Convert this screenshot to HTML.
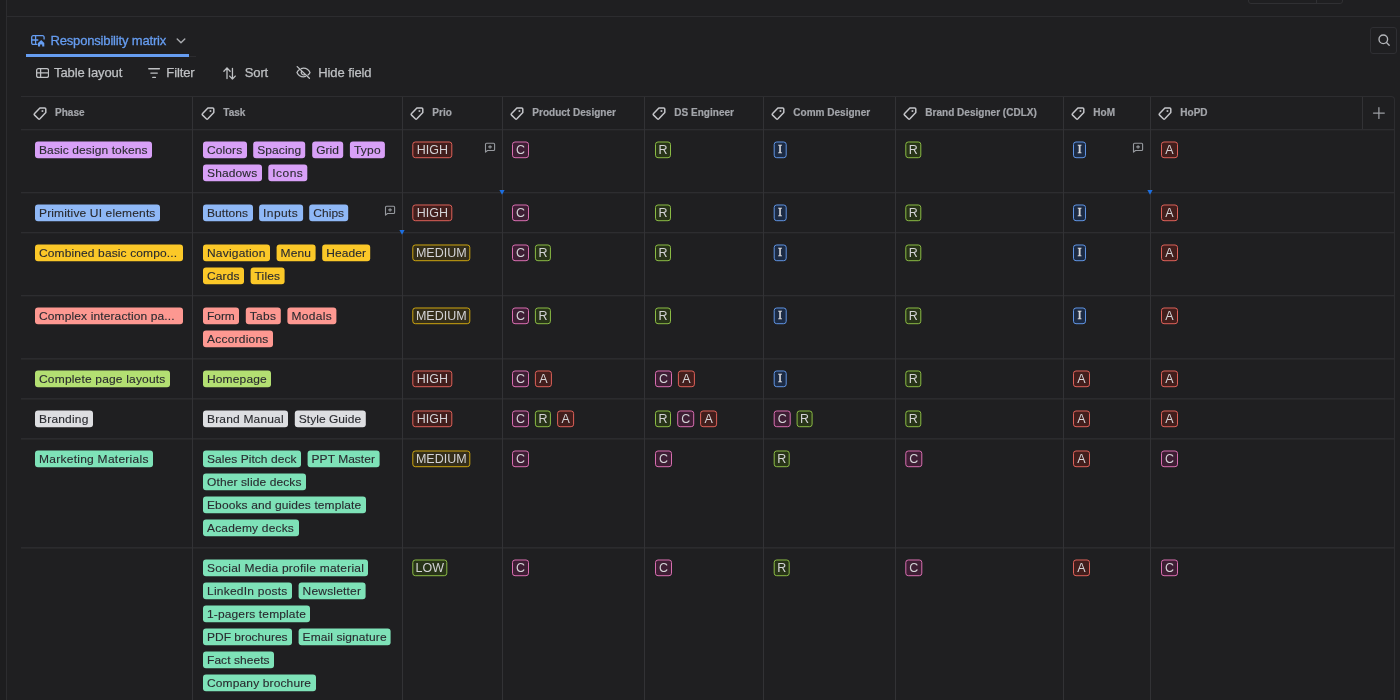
<!DOCTYPE html>
<html lang="en"><head><meta charset="utf-8"><title>Responsibility matrix</title>
<style>
*{box-sizing:border-box;margin:0;padding:0}
html,body{width:1400px;height:700px;overflow:hidden;background:#1f1f21;font-family:"Liberation Sans",Arial,sans-serif;color:#cecfd2}
#app{position:absolute;left:0;top:0;width:1400px;height:700px;overflow:hidden;will-change:transform;filter:blur(.3px)}
.abs{position:absolute}
#side{left:0;top:0;width:6px;height:700px;background:#1d1d1f}
#sideln{left:6px;top:0;width:1px;height:700px;background:#2c2c2f}
#topln{left:7px;top:16px;width:1393px;height:1px;background:#2c2c2f}
#btng{left:1248px;top:-19px;width:95px;height:23px;border:1px solid #303033;border-radius:3px}
#btng i{position:absolute;left:67px;top:0;width:1px;height:22px;background:#303033}
#tab{left:26px;top:27px;width:163px;height:30px;color:#669df1;font-size:13px;border-bottom:3px solid #669df1}
#tabext{left:189px;top:56px;width:7px;height:1px;background:#2c2c2f}
#tab svg.ti{position:absolute;left:5px;top:8.250px}
#tab span{position:absolute;left:24.500px;top:5.600px;white-space:nowrap;letter-spacing:-.17px;transform:translateY(-.5px);-webkit-text-stroke:.3px #669df1}
#tab svg.ch{position:absolute;left:149.500px;top:10px;color:#a9abaf}
#srch{left:1370px;top:27px;width:27px;height:27px;border:1px solid #2f2f33;border-radius:3px;color:#b4b6ba}
#srch svg{position:absolute;left:4.500px;top:4.200px}
.tb{top:64px;height:18px;font-size:13px;color:#bfc1c4;white-space:nowrap;line-height:18px;letter-spacing:-.1px;-webkit-text-stroke:.25px #bfc1c4}
.tb svg{position:absolute}
.hl{height:1px;background:#2d2d30;box-shadow:0 1px 0 rgba(45,45,48,.3)}
.hl.lo{background:#2b2b2e;box-shadow:0 1px 0 rgba(45,45,48,.55)}
.vl{width:1px;background:#323235}
.th{top:97px;height:32px;font-size:10px;font-weight:700;letter-spacing:.02px;color:#a3a5aa;line-height:31px;white-space:nowrap;-webkit-text-stroke:.2px #a3a5aa}
.th .hi{position:absolute;left:8.200px;top:10px;color:#c4c5c9}
.th span{position:absolute;left:30.300px;top:0}
.th.p .hi{left:11.500px}.th.p span{left:34px}
.th.k .hi{left:9px}.th.k span{left:31.300px}
.t{position:absolute;display:block;height:17px;line-height:17px;font-size:12px;border-radius:3px;white-space:nowrap;text-align:center;overflow:hidden;transform-origin:0 0}
.f{color:#292a2f;letter-spacing:.12px;-webkit-text-stroke:.12px #292a2f;text-align:left;padding-left:4px;line-height:19.800px}
.tr{padding-left:4px}
.o{border:1px solid;line-height:16.400px;color:#d3d3d6;font-size:12.500px}
.mono{font-family:"Liberation Serif",serif;font-size:12.500px;line-height:14.400px;letter-spacing:0;text-indent:0;-webkit-text-stroke:.5px #d3d3d6}
.pu{background:#d8a0f7}.bu{background:#8fb8f6}.ye{background:#fbc828}.re{background:#fd9891}.li{background:#b3df72}.gy{background:#dddee1}.gr{background:#7ee2b8}
.rd{border-color:#e0625a;background:#421e1c}
.mg{border-color:#db6fb2;background:#3e1e34}
.lm{border-color:#8dbd46;background:#283418}
.bl{border-color:#6196e6;background:#1c2b44}
.yl{border-color:#cfa810;background:#342e1a}
.cm{position:absolute;color:#96999e}
.tri{width:0;height:0;border-left:2.600px solid transparent;border-right:2.600px solid transparent;border-top:4.600px solid #1d6fe0}
</style></head><body><div id="app">
<div id="side" class="abs"></div><div id="sideln" class="abs"></div><div id="topln" class="abs"></div>
<div id="btng" class="abs"><i></i></div>
<div id="tab" class="abs">
<svg class="ti" width="14" height="12.500" viewBox="0 0 14 12.500" fill="none" stroke="currentColor" stroke-width="1.300"><path d="M6.500 9.400H2.200a1.500 1.500 0 0 1-1.500-1.500V2.200A1.500 1.500 0 0 1 2.200.7h9.400a1.500 1.500 0 0 1 1.500 1.500V4.600"/><path d="M.7 5h6.600M4.600.7v8.700"/><path d="M7 11.500V8.100L10.150 5.100 13.300 8.100V11.500h-2.100V9.400h-2.100v2.100Z" fill="currentColor" stroke="none"/></svg>
<span>Responsibility matrix</span>
<svg class="ch" width="10" height="8" viewBox="0 0 10 8" fill="none" stroke="currentColor" stroke-width="1.4" stroke-linecap="round" stroke-linejoin="round"><path d="M1.2 2 5 5.800 8.800 2"/></svg>
</div>
<div id="tabext" class="abs"></div>
<div id="srch" class="abs"><svg width="16" height="16" viewBox="0 0 16 16" fill="none" stroke="currentColor" stroke-width="1.350" stroke-linecap="round"><circle cx="7.300" cy="7.300" r="4.300"/><path d="M10.500 10.500 13.200 13.200"/></svg></div>
<div class="abs tb" style="left:36px"><svg style="left:0;top:3.800px" width="13.200" height="10.100" viewBox="0 0 13.200 10.100" fill="none" stroke="currentColor" stroke-width="1.300"><rect x=".65" y=".65" width="11.900" height="8.800" rx="1.800"/><path d="M.65 4.900h11.900M4.600.65v8.800"/></svg><span style="position:absolute;left:18px">Table layout</span></div>
<div class="abs tb" style="left:148px"><svg style="left:.4px;top:3.900px" width="12.200" height="10.300" viewBox="0 0 12.200 10.300" fill="none" stroke="currentColor" stroke-width="1.400" stroke-linecap="round"><path d="M.8.7h10.600M2.900 5.100h6.400M4.800 9.500h2.600"/></svg><span style="position:absolute;left:18.300px">Filter</span></div>
<div class="abs tb" style="left:223px"><svg style="left:0;top:2.500px" width="13.500" height="13" viewBox="0 0 13.500 13" fill="none" stroke="currentColor" stroke-width="1.300" stroke-linecap="round" stroke-linejoin="round"><path d="M4 11.500V.9M.9 4.200 4 .9 7.100 4.200M9.450 1.300v10.800M6.650 9.100l2.800 3 2.800-3"/></svg><span style="position:absolute;left:21.700px">Sort</span></div>
<div class="abs tb" style="left:296px"><svg style="left:0;top:2.300px" width="15" height="13" viewBox="0 0 15 13" fill="none" stroke="currentColor" stroke-width="1.300" stroke-linecap="round" stroke-linejoin="round"><path d="M5.200 2.600A7 7 0 0 1 7.500 2.200c3.500 0 5.800 2.800 6.500 4.300-.3.700-1 1.700-2 2.500M9.500 10.400a6.500 6.500 0 0 1-2 .4C4 10.800 1.700 8 1 6.500c.4-.9 1.300-2 2.500-2.900"/><path d="M5.600 5.200a2.400 2.400 0 0 0 3.300 3.300"/><path d="M1.200.6 13.400 12.300"/></svg><span style="position:absolute;left:22.300px">Hide field</span></div>

<div class="abs" style="left:21px;top:96px;width:1374px;height:620px;border-top:1px solid #2d2d30;border-right:1px solid #2d2d30;border-top-right-radius:4px"></div>
<div class="abs hl" style="left:21px;top:129px;width:1373px"></div>
<div class="abs hl" style="left:21px;top:192px;width:1373px"></div>
<div class="abs hl" style="left:21px;top:232px;width:1373px"></div>
<div class="abs hl" style="left:21px;top:295px;width:1373px"></div>
<div class="abs hl lo" style="left:21px;top:358px;width:1373px"></div>
<div class="abs hl lo" style="left:21px;top:398px;width:1373px"></div>
<div class="abs hl lo" style="left:21px;top:438px;width:1373px"></div>
<div class="abs hl lo" style="left:21px;top:547px;width:1373px"></div>
<div class="abs vl" style="left:192px;top:97px;height:603px"></div>
<div class="abs vl" style="left:402px;top:97px;height:603px"></div>
<div class="abs vl" style="left:502px;top:97px;height:603px"></div>
<div class="abs vl" style="left:644px;top:97px;height:603px"></div>
<div class="abs vl" style="left:763px;top:97px;height:603px"></div>
<div class="abs vl" style="left:895px;top:97px;height:603px"></div>
<div class="abs vl" style="left:1063px;top:97px;height:603px"></div>
<div class="abs vl" style="left:1150px;top:97px;height:603px"></div>
<div class="abs vl" style="left:1362px;top:97px;height:32px"></div>
<svg class="abs" style="left:1372px;top:106px;color:#9c9ea3" width="14" height="14" viewBox="0 0 14 14" fill="none" stroke="currentColor" stroke-width="1.250" stroke-linecap="round"><path d="M6.900 1.700v10.700M1.500 7.050h10.800"/></svg>
<div class="abs th p" style="left:21px"><svg class="hi" width="14" height="14" viewBox="0 0 14 14" fill="none" stroke="currentColor" stroke-width="1.5" stroke-linejoin="round"><path d="M6.9.9H11.600Q12.800.9 12.800 2.100V5.600L6.900 11.800Q6.100 12.600 5.300 11.800L1.600 8.100Q.8 7.300 1.600 6.500Z"/><rect x="8.600" y="3.200" width="1.700" height="1.700" fill="currentColor" stroke="none"/></svg><span>Phase</span></div>
<div class="abs th k" style="left:192px"><svg class="hi" width="14" height="14" viewBox="0 0 14 14" fill="none" stroke="currentColor" stroke-width="1.5" stroke-linejoin="round"><path d="M6.9.9H11.600Q12.800.9 12.800 2.100V5.600L6.900 11.800Q6.100 12.600 5.300 11.800L1.600 8.100Q.8 7.300 1.600 6.500Z"/><rect x="8.600" y="3.200" width="1.700" height="1.700" fill="currentColor" stroke="none"/></svg><span>Task</span></div>
<div class="abs th" style="left:402px"><svg class="hi" width="14" height="14" viewBox="0 0 14 14" fill="none" stroke="currentColor" stroke-width="1.5" stroke-linejoin="round"><path d="M6.9.9H11.600Q12.800.9 12.800 2.100V5.600L6.900 11.800Q6.100 12.600 5.300 11.800L1.600 8.100Q.8 7.300 1.600 6.500Z"/><rect x="8.600" y="3.200" width="1.700" height="1.700" fill="currentColor" stroke="none"/></svg><span>Prio</span></div>
<div class="abs th" style="left:502px"><svg class="hi" width="14" height="14" viewBox="0 0 14 14" fill="none" stroke="currentColor" stroke-width="1.5" stroke-linejoin="round"><path d="M6.9.9H11.600Q12.800.9 12.800 2.100V5.600L6.900 11.800Q6.100 12.600 5.300 11.800L1.600 8.100Q.8 7.300 1.600 6.500Z"/><rect x="8.600" y="3.200" width="1.700" height="1.700" fill="currentColor" stroke="none"/></svg><span>Product Designer</span></div>
<div class="abs th" style="left:644px"><svg class="hi" width="14" height="14" viewBox="0 0 14 14" fill="none" stroke="currentColor" stroke-width="1.5" stroke-linejoin="round"><path d="M6.9.9H11.600Q12.800.9 12.800 2.100V5.600L6.900 11.800Q6.100 12.600 5.300 11.800L1.600 8.100Q.8 7.300 1.600 6.500Z"/><rect x="8.600" y="3.200" width="1.700" height="1.700" fill="currentColor" stroke="none"/></svg><span>DS Engineer</span></div>
<div class="abs th" style="left:763px"><svg class="hi" width="14" height="14" viewBox="0 0 14 14" fill="none" stroke="currentColor" stroke-width="1.5" stroke-linejoin="round"><path d="M6.9.9H11.600Q12.800.9 12.800 2.100V5.600L6.900 11.800Q6.100 12.600 5.300 11.800L1.600 8.100Q.8 7.300 1.600 6.500Z"/><rect x="8.600" y="3.200" width="1.700" height="1.700" fill="currentColor" stroke="none"/></svg><span>Comm Designer</span></div>
<div class="abs th" style="left:895px"><svg class="hi" width="14" height="14" viewBox="0 0 14 14" fill="none" stroke="currentColor" stroke-width="1.5" stroke-linejoin="round"><path d="M6.9.9H11.600Q12.800.9 12.800 2.100V5.600L6.900 11.800Q6.100 12.600 5.300 11.800L1.600 8.100Q.8 7.300 1.600 6.500Z"/><rect x="8.600" y="3.200" width="1.700" height="1.700" fill="currentColor" stroke="none"/></svg><span>Brand Designer (CDLX)</span></div>
<div class="abs th" style="left:1063px"><svg class="hi" width="14" height="14" viewBox="0 0 14 14" fill="none" stroke="currentColor" stroke-width="1.5" stroke-linejoin="round"><path d="M6.9.9H11.600Q12.800.9 12.800 2.100V5.600L6.900 11.800Q6.100 12.600 5.300 11.800L1.600 8.100Q.8 7.300 1.600 6.500Z"/><rect x="8.600" y="3.200" width="1.700" height="1.700" fill="currentColor" stroke="none"/></svg><span>HoM</span></div>
<div class="abs th" style="left:1150px"><svg class="hi" width="14" height="14" viewBox="0 0 14 14" fill="none" stroke="currentColor" stroke-width="1.5" stroke-linejoin="round"><path d="M6.9.9H11.600Q12.800.9 12.800 2.100V5.600L6.900 11.800Q6.100 12.600 5.300 11.800L1.600 8.100Q.8 7.300 1.600 6.500Z"/><rect x="8.600" y="3.200" width="1.700" height="1.700" fill="currentColor" stroke="none"/></svg><span>HoPD</span></div>
<!-- row 1 -->
<span class="t f pu" style="left:35px;top:141px;width:117px;transform:translate(0px,0.5px) scaleY(.982);letter-spacing:0.10px">Basic design tokens</span>
<span class="t f pu" style="left:203px;top:141px;width:44px;transform:translate(0px,0.5px) scaleY(.982);letter-spacing:0.09px">Colors</span>
<span class="t f pu" style="left:253px;top:141px;width:52px;transform:translate(0.2px,0.5px) scaleY(.982);letter-spacing:0.09px">Spacing</span>
<span class="t f pu" style="left:312px;top:141px;width:31px;transform:translate(0.2px,0.5px) scaleY(.982);letter-spacing:0.01px">Grid</span>
<span class="t f pu" style="left:349px;top:141px;width:35px;transform:translate(0.9px,0.5px) scaleY(.982);letter-spacing:0.22px">Typo</span>
<span class="t f pu" style="left:203px;top:164px;width:59px;transform:translate(0px,0.5px) scaleY(.982);letter-spacing:0.13px">Shadows</span>
<span class="t f pu" style="left:268px;top:164px;width:39px;transform:translate(0.3px,0.5px) scaleY(.982);letter-spacing:0.45px">Icons</span>
<span class="t o rd" style="left:412px;top:141px;width:40px;transform:translate(0.3px,0.5px) scaleY(.982)">HIGH</span>
<span class="t o mg" style="left:512px;top:141px;width:17px;transform:translate(0px,0.5px) scaleY(.982)">C</span>
<span class="t o lm" style="left:655px;top:141px;width:16px;transform:translate(0px,0.5px) scaleY(.982)">R</span>
<span class="t o bl mono" style="left:773px;top:141px;width:13px;transform:translate(0.7px,0.5px) scaleY(.982)">I</span>
<span class="t o lm" style="left:905px;top:141px;width:16px;transform:translate(0.3px,0.5px) scaleY(.982)">R</span>
<span class="t o bl mono" style="left:1073px;top:141px;width:13px;transform:translate(0px,0.5px) scaleY(.982)">I</span>
<span class="t o rd" style="left:1161px;top:141px;width:17px;transform:translate(0px,0.5px) scaleY(.982)">A</span>
<!-- row 2 -->
<span class="t f bu" style="left:35px;top:204px;width:125px;transform:translate(0px,0.5px) scaleY(.982);letter-spacing:0.15px">Primitive UI elements</span>
<span class="t f bu" style="left:203px;top:204px;width:50px;transform:translate(0px,0.5px) scaleY(.982);letter-spacing:0.06px">Buttons</span>
<span class="t f bu" style="left:259px;top:204px;width:44px;transform:translate(0.1px,0.5px) scaleY(.982);letter-spacing:0.40px">Inputs</span>
<span class="t f bu" style="left:309px;top:204px;width:39px;transform:translate(0.2px,0.5px) scaleY(.982);letter-spacing:0.06px">Chips</span>
<span class="t o rd" style="left:412px;top:204px;width:40px;transform:translate(0.3px,0.5px) scaleY(.982)">HIGH</span>
<span class="t o mg" style="left:512px;top:204px;width:17px;transform:translate(0px,0.5px) scaleY(.982)">C</span>
<span class="t o lm" style="left:655px;top:204px;width:16px;transform:translate(0px,0.5px) scaleY(.982)">R</span>
<span class="t o bl mono" style="left:773px;top:204px;width:13px;transform:translate(0.7px,0.5px) scaleY(.982)">I</span>
<span class="t o lm" style="left:905px;top:204px;width:16px;transform:translate(0.3px,0.5px) scaleY(.982)">R</span>
<span class="t o bl mono" style="left:1073px;top:204px;width:13px;transform:translate(0px,0.5px) scaleY(.982)">I</span>
<span class="t o rd" style="left:1161px;top:204px;width:17px;transform:translate(0px,0.5px) scaleY(.982)">A</span>
<!-- row 3 -->
<span class="t f ye tr" style="left:35px;top:244px;width:148px;transform:translate(0px,0.5px) scaleY(.982)">Combined basic compo...</span>
<span class="t f ye" style="left:203px;top:244px;width:67px;transform:translate(0px,0.5px) scaleY(.982);letter-spacing:0.19px">Navigation</span>
<span class="t f ye" style="left:276px;top:244px;width:39px;transform:translate(0.6px,0.5px) scaleY(.982);letter-spacing:0.14px">Menu</span>
<span class="t f ye" style="left:322px;top:244px;width:48px;transform:translate(0.2px,0.5px) scaleY(.982);letter-spacing:0.09px">Header</span>
<span class="t f ye" style="left:203px;top:267px;width:41px;transform:translate(0px,0.5px) scaleY(.982);letter-spacing:0.12px">Cards</span>
<span class="t f ye" style="left:250px;top:267px;width:34px;transform:translate(0.6px,0.5px) scaleY(.982);letter-spacing:0.14px">Tiles</span>
<span class="t o yl" style="left:412px;top:244px;width:58px;transform:translate(0.3px,0.5px) scaleY(.982)">MEDIUM</span>
<span class="t o mg" style="left:512px;top:244px;width:17px;transform:translate(0px,0.5px) scaleY(.982)">C</span>
<span class="t o lm" style="left:534px;top:244px;width:16px;transform:translate(0.9px,0.5px) scaleY(.982)">R</span>
<span class="t o lm" style="left:655px;top:244px;width:16px;transform:translate(0px,0.5px) scaleY(.982)">R</span>
<span class="t o bl mono" style="left:773px;top:244px;width:13px;transform:translate(0.7px,0.5px) scaleY(.982)">I</span>
<span class="t o lm" style="left:905px;top:244px;width:16px;transform:translate(0.3px,0.5px) scaleY(.982)">R</span>
<span class="t o bl mono" style="left:1073px;top:244px;width:13px;transform:translate(0px,0.5px) scaleY(.982)">I</span>
<span class="t o rd" style="left:1161px;top:244px;width:17px;transform:translate(0px,0.5px) scaleY(.982)">A</span>
<!-- row 4 -->
<span class="t f re tr" style="left:35px;top:307px;width:148px;transform:translate(0px,0.5px) scaleY(.982)">Complex interaction pa...</span>
<span class="t f re" style="left:203px;top:307px;width:36px;transform:translate(0px,0.5px) scaleY(.982);letter-spacing:-0.05px">Form</span>
<span class="t f re" style="left:245px;top:307px;width:35px;transform:translate(0.8px,0.5px) scaleY(.982);letter-spacing:0.31px">Tabs</span>
<span class="t f re" style="left:287px;top:307px;width:49px;transform:translate(0.4px,0.5px) scaleY(.982);letter-spacing:0.32px">Modals</span>
<span class="t f re" style="left:203px;top:330px;width:70px;transform:translate(0px,0.5px) scaleY(.982);letter-spacing:0.22px">Accordions</span>
<span class="t o yl" style="left:412px;top:307px;width:58px;transform:translate(0.3px,0.5px) scaleY(.982)">MEDIUM</span>
<span class="t o mg" style="left:512px;top:307px;width:17px;transform:translate(0px,0.5px) scaleY(.982)">C</span>
<span class="t o lm" style="left:534px;top:307px;width:16px;transform:translate(0.9px,0.5px) scaleY(.982)">R</span>
<span class="t o lm" style="left:655px;top:307px;width:16px;transform:translate(0px,0.5px) scaleY(.982)">R</span>
<span class="t o bl mono" style="left:773px;top:307px;width:13px;transform:translate(0.7px,0.5px) scaleY(.982)">I</span>
<span class="t o lm" style="left:905px;top:307px;width:16px;transform:translate(0.3px,0.5px) scaleY(.982)">R</span>
<span class="t o bl mono" style="left:1073px;top:307px;width:13px;transform:translate(0px,0.5px) scaleY(.982)">I</span>
<span class="t o rd" style="left:1161px;top:307px;width:17px;transform:translate(0px,0.5px) scaleY(.982)">A</span>
<!-- row 5 -->
<span class="t f li" style="left:35px;top:370px;width:135px;transform:translate(0px,0.5px) scaleY(.982);letter-spacing:0.18px">Complete page layouts</span>
<span class="t f li" style="left:203px;top:370px;width:68px;transform:translate(0px,0.5px) scaleY(.982);letter-spacing:0.14px">Homepage</span>
<span class="t o rd" style="left:412px;top:370px;width:40px;transform:translate(0.3px,0.5px) scaleY(.982)">HIGH</span>
<span class="t o mg" style="left:512px;top:370px;width:17px;transform:translate(0px,0.5px) scaleY(.982)">C</span>
<span class="t o rd" style="left:534px;top:370px;width:17px;transform:translate(0.9px,0.5px) scaleY(.982)">A</span>
<span class="t o mg" style="left:655px;top:370px;width:17px;transform:translate(0px,0.5px) scaleY(.982)">C</span>
<span class="t o rd" style="left:677px;top:370px;width:17px;transform:translate(0.9px,0.5px) scaleY(.982)">A</span>
<span class="t o bl mono" style="left:773px;top:370px;width:13px;transform:translate(0.7px,0.5px) scaleY(.982)">I</span>
<span class="t o lm" style="left:905px;top:370px;width:16px;transform:translate(0.3px,0.5px) scaleY(.982)">R</span>
<span class="t o rd" style="left:1073px;top:370px;width:17px;transform:translate(0px,0.5px) scaleY(.982)">A</span>
<span class="t o rd" style="left:1161px;top:370px;width:17px;transform:translate(0px,0.5px) scaleY(.982)">A</span>
<!-- row 6 -->
<span class="t f gy" style="left:35px;top:410px;width:58px;transform:translate(0px,0.5px) scaleY(.982);letter-spacing:0.19px">Branding</span>
<span class="t f gy" style="left:203px;top:410px;width:85px;transform:translate(0px,0.5px) scaleY(.982);letter-spacing:0.17px">Brand Manual</span>
<span class="t f gy" style="left:294px;top:410px;width:71px;transform:translate(0.8px,0.5px) scaleY(.982);letter-spacing:0.03px">Style Guide</span>
<span class="t o rd" style="left:412px;top:410px;width:40px;transform:translate(0.3px,0.5px) scaleY(.982)">HIGH</span>
<span class="t o mg" style="left:512px;top:410px;width:17px;transform:translate(0px,0.5px) scaleY(.982)">C</span>
<span class="t o lm" style="left:534px;top:410px;width:16px;transform:translate(0.9px,0.5px) scaleY(.982)">R</span>
<span class="t o rd" style="left:557px;top:410px;width:17px;transform:translate(0.1px,0.5px) scaleY(.982)">A</span>
<span class="t o lm" style="left:655px;top:410px;width:16px;transform:translate(0px,0.5px) scaleY(.982)">R</span>
<span class="t o mg" style="left:677px;top:410px;width:17px;transform:translate(0.2px,0.5px) scaleY(.982)">C</span>
<span class="t o rd" style="left:700px;top:410px;width:17px;transform:translate(0.1px,0.5px) scaleY(.982)">A</span>
<span class="t o mg" style="left:773px;top:410px;width:17px;transform:translate(0.7px,0.5px) scaleY(.982)">C</span>
<span class="t o lm" style="left:796px;top:410px;width:16px;transform:translate(0.6px,0.5px) scaleY(.982)">R</span>
<span class="t o lm" style="left:905px;top:410px;width:16px;transform:translate(0.3px,0.5px) scaleY(.982)">R</span>
<span class="t o rd" style="left:1073px;top:410px;width:17px;transform:translate(0px,0.5px) scaleY(.982)">A</span>
<span class="t o rd" style="left:1161px;top:410px;width:17px;transform:translate(0px,0.5px) scaleY(.982)">A</span>
<!-- row 7 -->
<span class="t f gr" style="left:35px;top:450px;width:118px;transform:translate(0px,0.5px) scaleY(.982);letter-spacing:0.26px">Marketing Materials</span>
<span class="t f gr" style="left:203px;top:450px;width:98px;transform:translate(0px,0.5px) scaleY(.982);letter-spacing:0.05px">Sales Pitch deck</span>
<span class="t f gr" style="left:307px;top:450px;width:72px;transform:translate(0.6px,0.5px) scaleY(.982);letter-spacing:0.02px">PPT Master</span>
<span class="t f gr" style="left:203px;top:473px;width:103px;transform:translate(0px,0.5px) scaleY(.982);letter-spacing:0.11px">Other slide decks</span>
<span class="t f gr" style="left:203px;top:496px;width:163px;transform:translate(0px,0.5px) scaleY(.982);letter-spacing:0.11px">Ebooks and guides template</span>
<span class="t f gr" style="left:203px;top:519px;width:96px;transform:translate(0px,0.5px) scaleY(.982);letter-spacing:0.18px">Academy decks</span>
<span class="t o yl" style="left:412px;top:450px;width:58px;transform:translate(0.3px,0.5px) scaleY(.982)">MEDIUM</span>
<span class="t o mg" style="left:512px;top:450px;width:17px;transform:translate(0px,0.5px) scaleY(.982)">C</span>
<span class="t o mg" style="left:655px;top:450px;width:17px;transform:translate(0px,0.5px) scaleY(.982)">C</span>
<span class="t o lm" style="left:773px;top:450px;width:16px;transform:translate(0.7px,0.5px) scaleY(.982)">R</span>
<span class="t o mg" style="left:905px;top:450px;width:17px;transform:translate(0.3px,0.5px) scaleY(.982)">C</span>
<span class="t o rd" style="left:1073px;top:450px;width:17px;transform:translate(0px,0.5px) scaleY(.982)">A</span>
<span class="t o mg" style="left:1161px;top:450px;width:17px;transform:translate(0px,0.5px) scaleY(.982)">C</span>
<!-- row 8 -->
<span class="t f gr" style="left:203px;top:559px;width:165px;transform:translate(0px,0.5px) scaleY(.982);letter-spacing:0.22px">Social Media profile material</span>
<span class="t f gr" style="left:203px;top:582px;width:89px;transform:translate(0px,0.5px) scaleY(.982);letter-spacing:0.23px">LinkedIn posts</span>
<span class="t f gr" style="left:298px;top:582px;width:67px;transform:translate(0.6px,0.5px) scaleY(.982);letter-spacing:0.18px">Newsletter</span>
<span class="t f gr" style="left:203px;top:605px;width:107px;transform:translate(0px,0.5px) scaleY(.982);letter-spacing:0.13px">1-pagers template</span>
<span class="t f gr" style="left:203px;top:628px;width:89px;transform:translate(0px,0.5px) scaleY(.982);letter-spacing:-0.01px">PDF brochures</span>
<span class="t f gr" style="left:298px;top:628px;width:92px;transform:translate(0.6px,0.5px) scaleY(.982);letter-spacing:0.09px">Email signature</span>
<span class="t f gr" style="left:203px;top:651px;width:71px;transform:translate(0px,0.5px) scaleY(.982);letter-spacing:0.05px">Fact sheets</span>
<span class="t f gr" style="left:203px;top:674px;width:113px;transform:translate(0px,0.5px) scaleY(.982);letter-spacing:0.13px">Company brochure</span>
<span class="t o lm" style="left:412px;top:559px;width:35px;transform:translate(0.3px,0.5px) scaleY(.982)">LOW</span>
<span class="t o mg" style="left:512px;top:559px;width:17px;transform:translate(0px,0.5px) scaleY(.982)">C</span>
<span class="t o mg" style="left:655px;top:559px;width:17px;transform:translate(0px,0.5px) scaleY(.982)">C</span>
<span class="t o lm" style="left:773px;top:559px;width:16px;transform:translate(0.7px,0.5px) scaleY(.982)">R</span>
<span class="t o mg" style="left:905px;top:559px;width:17px;transform:translate(0.3px,0.5px) scaleY(.982)">C</span>
<span class="t o rd" style="left:1073px;top:559px;width:17px;transform:translate(0px,0.5px) scaleY(.982)">A</span>
<span class="t o mg" style="left:1161px;top:559px;width:17px;transform:translate(0px,0.5px) scaleY(.982)">C</span>
<div class="abs" style="left:484px;top:142.2px"><svg class="cm" width="12" height="11" viewBox="0 0 12 11" fill="none" stroke="currentColor" stroke-width="1.100" stroke-linejoin="round" stroke-linecap="round"><path d="M2.500 1.300h7.100q1 0 1 1v5.200q0 1-1 1H3.500L1.500 10.200V2.300q0-1 1-1Z"/><path d="M6.050 3.500v2.800M4.650 4.900h2.800"/></svg></div>
<div class="abs" style="left:1132px;top:142.2px"><svg class="cm" width="12" height="11" viewBox="0 0 12 11" fill="none" stroke="currentColor" stroke-width="1.100" stroke-linejoin="round" stroke-linecap="round"><path d="M2.500 1.300h7.100q1 0 1 1v5.200q0 1-1 1H3.500L1.500 10.200V2.300q0-1 1-1Z"/><path d="M6.050 3.500v2.800M4.650 4.900h2.800"/></svg></div>
<div class="abs" style="left:384px;top:205.2px"><svg class="cm" width="12" height="11" viewBox="0 0 12 11" fill="none" stroke="currentColor" stroke-width="1.100" stroke-linejoin="round" stroke-linecap="round"><path d="M2.500 1.300h7.100q1 0 1 1v5.200q0 1-1 1H3.500L1.500 10.200V2.300q0-1 1-1Z"/><path d="M6.050 3.500v2.800M4.650 4.900h2.800"/></svg></div>
<svg class="abs" style="left:499.2px;top:190.3px" width="6" height="5" viewBox="0 0 6 5"><path d="M.4 0h5.200L3 4.800Z" fill="#1d6fe0"/></svg>
<svg class="abs" style="left:1147.2px;top:190.3px" width="6" height="5" viewBox="0 0 6 5"><path d="M.4 0h5.200L3 4.800Z" fill="#1d6fe0"/></svg>
<svg class="abs" style="left:399.2px;top:230.3px" width="6" height="5" viewBox="0 0 6 5"><path d="M.4 0h5.200L3 4.800Z" fill="#1d6fe0"/></svg>
</div></body></html>
